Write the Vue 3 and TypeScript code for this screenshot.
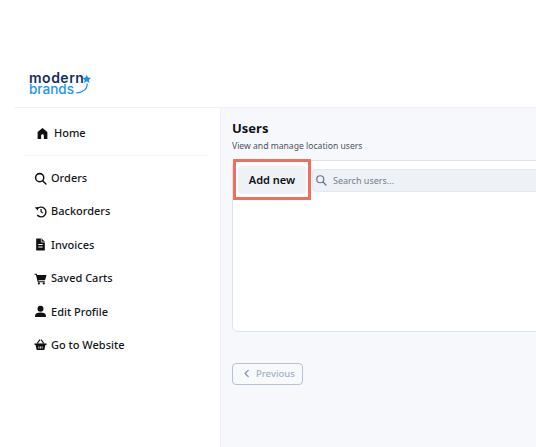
<script setup lang="ts">
const items = [
  { label: 'Orders', icon: 'search' },
  { label: 'Backorders', icon: 'history' },
  { label: 'Invoices', icon: 'file' },
  { label: 'Saved Carts', icon: 'cart' },
  { label: 'Edit Profile', icon: 'user' },
  { label: 'Go to Website', icon: 'basket' },
]
</script>

<template>
  <div class="page">
    <header class="top">
      <div class="logo">
        <div class="logo-text">
          <span class="l1">modern</span>
          <span class="l2">brands</span>
        </div>
        <svg class="logo-mark" viewBox="0 0 26 26" fill="none">
          <path d="M19.500 1l1.600 3.400 3.700.4-2.700 2.500.8 3.700-3.400-1.900-3.400 1.900.8-3.700-2.700-2.500 3.700-.4z" fill="#1e90e8" />
          <path d="M20 12c.3 6.500-4.500 11-13 11.300" stroke="#1e90e8" stroke-width="1.400" stroke-linecap="round" />
        </svg>
      </div>
    </header>
    <div class="rule"></div>
    <div class="body">
      <aside class="side">
        <a class="home">
          <svg viewBox="0 0 24 24" width="13" height="13" fill="#111"><path d="M12 2 3 9v13h6.500v-6a2.500 2.500 0 0 1 5 0v6H21V9z" /></svg>
          <span>Home</span>
        </a>
        <div class="sep"></div>
        <nav class="nav">
          <a v-for="item in items" :key="item.label" class="nav-item">
            <svg v-if="item.icon === 'search'" viewBox="0 0 24 24" width="13" height="13" fill="none" stroke="#111" stroke-width="2.800" stroke-linecap="round"><circle cx="10.500" cy="10.500" r="7.500" /><path d="m16 16 6 6" /></svg>
            <svg v-else-if="item.icon === 'history'" viewBox="0 0 24 24" width="13" height="13" fill="none" stroke="#111" stroke-width="2.600"><path d="M5.500 8A9 9 0 1 1 6 18.500" /><path d="M1.500 4.500 8 3.500l-1 6.500z" fill="#111" stroke="none" /><path d="M13 7.500v5l3.500 2.500" stroke-width="2.200" /></svg>
            <svg v-else-if="item.icon === 'file'" viewBox="0 0 24 24" width="13" height="13" fill="#111"><path d="M4 1h10l6 6v16H4z" /><path d="M8 11h8v2H8zM8 15.500h8v2H8z" fill="#fff" /><path d="M13.500 1v6.500H20" fill="none" stroke="#fff" stroke-width="1.300" /></svg>
            <svg v-else-if="item.icon === 'cart'" viewBox="0 0 24 24" width="13" height="13" fill="#111"><path d="M1 3h4l.8 2.500H23l-2.500 9.500H8l.5 2H20v2H7L3.500 5H1z" /><circle cx="9" cy="21" r="2" /><circle cx="18" cy="21" r="2" /></svg>
            <svg v-else-if="item.icon === 'user'" viewBox="0 0 24 24" width="13" height="13" fill="#111"><circle cx="12" cy="7" r="5.500" /><path d="M2 22v-2.500C2 16 6 14 12 14s10 2 10 5.500V22z" /></svg>
            <svg v-else viewBox="0 0 24 24" width="13" height="13" fill="#111"><path d="M1 10h22v3H1z" /><path d="M3 13h18l-2 9H5z" /><path d="M6 10l5-7M18 10l-5-7" stroke="#111" stroke-width="2" fill="none" /><path d="M9 15.500v4M12 15.500v4M15 15.500v4" stroke="#fff" stroke-width="1.500" /></svg>
            <span>{{ item.label }}</span>
          </a>
        </nav>
      </aside>
      <main class="main">
        <h1>Users</h1>
        <p class="sub">View and manage location users</p>
        <section class="card">
          <div class="tools">
            <div class="mark"><button class="add">Add new</button></div>
            <div class="search">
              <svg viewBox="0 0 24 24" width="12" height="12" fill="none" stroke="#64748b" stroke-width="2.400" stroke-linecap="round"><circle cx="10.500" cy="10.500" r="7" /><path d="m16 16 6 6" /></svg>
              <span>Search users...</span>
            </div>
          </div>
        </section>
        <button class="prev">
          <svg viewBox="0 0 10 12" width="7" height="9" fill="none" stroke="#7f95b3" stroke-width="1.800" stroke-linecap="round" stroke-linejoin="round"><path d="M7.500 1.500 3 6l4.500 4.500" /></svg>
          Previous
        </button>
      </main>
    </div>
  </div>
</template>

<style>
html, body { margin: 0; overflow: hidden; background: #fff; }
</style>

<style scoped>
.page {
  width: 536px;
  height: 447px;
  overflow: hidden;
  display: flex;
  flex-direction: column;
  font-family: "Noto Sans", sans-serif;
  color: #14171c;
}
.top {
  height: 107px;
  flex: none;
  box-sizing: border-box;
  padding: 72px 0 0 29px;
}
.logo { display: flex; align-items: flex-start; }
.logo-text { display: flex; flex-direction: column; font-family: Inter, sans-serif; font-weight: 500; font-size: 13.500px; line-height: 11.500px; }
.l1 { color: #12305f; font-weight: 600; font-size: 14px; letter-spacing: 0.500px; }
.l2 { color: #2196ea; }
.logo-mark { margin: 1px 0 0 -13px; width: 21px; height: 23px; flex: none; }
.rule { height: 1px; flex: none; margin-left: 14px; background: #f1f3f5; }
.body { flex: 1; display: flex; min-height: 0; }
.side { width: 220px; flex: none; box-sizing: border-box; padding: 17px 0 0 14px; }
.home, .nav-item { display: flex; align-items: center; font-size: 11px; font-weight: 500; line-height: 16px; }
.home { gap: 5px; padding-left: 22px; }
.home svg { flex: none; }
.sep { height: 1px; background: #f2f4f6; margin: 14px 11px 14px 9px; }
.nav { display: flex; flex-direction: column; gap: 17.400px; padding-left: 20px; }
.nav-item { gap: 4px; }
.nav-item svg { flex: none; }
.main {
  flex: 1;
  min-width: 0;
  background: #f6f8fb;
  border-left: 1px solid #eef0f3;
  box-sizing: border-box;
  padding: 11px 0 0 11px;
}
h1 { margin: 0; font-size: 13px; font-weight: 700; line-height: 18px; color: #0f1217; }
.sub { margin: 3px 0 0; font-size: 8.600px; line-height: 13px; color: #4a5360; }
.card {
  margin-top: 7px;
  width: 340px;
  height: 172px;
  box-sizing: border-box;
  background: #fff;
  border: 1px solid #dde3eb;
  border-radius: 6px;
}
.tools { display: flex; align-items: center; gap: 1px; margin-top: -2px; }
.mark {
  padding: 4px 2px 3px;
  background: #fff;
  border: 3px solid #ef6f5e;
  position: relative;
}
.add {
  display: block;
  width: 68px;
  height: 28px;
  padding: 0 0 2px;
  border: 0;
  border-radius: 3px;
  background: #eef1f6;
  font: 600 11px "Noto Sans", sans-serif;
  color: #0f1217;
}
.search {
  flex: 1;
  height: 23px;
  box-sizing: border-box;
  margin-top: 1px;
  display: flex;
  align-items: center;
  gap: 6px;
  padding-left: 2px;
  background: #eef2f7;
  border: 1px solid #e3e8ef;
  border-radius: 4px 0 0 4px;
  font-size: 9px;
  color: #6f7c8d;
}
.prev {
  margin-top: 31px;
  width: 71px;
  height: 22px;
  box-sizing: border-box;
  display: flex;
  align-items: center;
  gap: 6px;
  padding: 0 0 1px 10px;
  background: #f7f9fb;
  border: 1px solid #b4c2d3;
  border-radius: 4px;
  font: 500 9.500px "Noto Sans", sans-serif;
  color: #a3b1c4;
}
</style>
